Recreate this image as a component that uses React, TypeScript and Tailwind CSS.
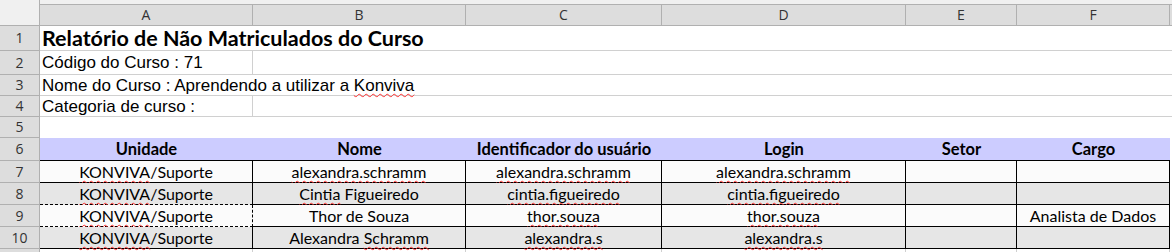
import type { ReactNode } from "react";

const Sp = ({ children }: { children: ReactNode }) => (
  <span className="underline decoration-wavy decoration-[#ff3030] decoration-1 underline-offset-[2px] [text-decoration-skip-ink:none]">
    {children}
  </span>
);

const COLS = [
  { letter: "A", w: "w-[213px]" },
  { letter: "B", w: "w-[213px]" },
  { letter: "C", w: "w-[196px]" },
  { letter: "D", w: "w-[244px]" },
  { letter: "E", w: "w-[111px]" },
  { letter: "F", w: "w-[153px]" },
];

const HEADERS = ["Unidade", "Nome", "Identificador do usuário", "Login", "Setor", "Cargo"];

type Row = { n: number; cells: ReactNode[] };

const DATA: Row[] = [
  {
    n: 7,
    cells: [
      <><Sp>KONVIVA</Sp>/Suporte</>,
      <Sp>alexandra.schramm</Sp>,
      <Sp>alexandra.schramm</Sp>,
      <Sp>alexandra.schramm</Sp>,
      "",
      "",
    ],
  },
  {
    n: 8,
    cells: [
      <><Sp>KONVIVA</Sp>/Suporte</>,
      <><Sp>Cintia</Sp> Figueiredo</>,
      <Sp>cintia.figueiredo</Sp>,
      <Sp>cintia.figueiredo</Sp>,
      "",
      "",
    ],
  },
  {
    n: 9,
    cells: [
      <><Sp>KONVIVA</Sp>/Suporte</>,
      "Thor de Souza",
      <Sp>thor.souza</Sp>,
      <Sp>thor.souza</Sp>,
      "",
      "Analista de Dados",
    ],
  },
  {
    n: 10,
    cells: [
      <><Sp>KONVIVA</Sp>/Suporte</>,
      <>Alexandra <Sp>Schramm</Sp></>,
      <Sp>alexandra.s</Sp>,
      <Sp>alexandra.s</Sp>,
      "",
      "",
    ],
  },
];

const RowHead = ({ n }: { n: number }) => (
  <div className="h-full w-[40px] shrink-0 flex items-center justify-center bg-[#dddddd] border-r border-b border-[#b0b0b0] text-[14px] leading-none text-[#333] font-['Open_Sans',sans-serif]">
    {n}
  </div>
);

// A8's bottom edge and A9's bottom/right edges carry the copy marquee
const cellBorder = (row: number, col: number) => {
  if (col === 0 && row === 8) return "border-b border-r border-black [border-bottom-style:dashed]";
  if (col === 0 && row === 9) return "border-b border-r border-black border-dashed";
  return "border-b border-r border-black";
};

export default function App() {
  return (
    <div className="w-[1172px] h-[252px] overflow-hidden bg-white text-black">
      {/* column letters */}
      <div className="flex h-[26px] bg-[#f0f0f0]">
        <div className="w-[40px] shrink-0 border-r border-b border-[#b0b0b0]" />
        <div className="flex flex-1 mt-[4px] bg-[#dddddd] border-t border-b border-[#b0b0b0] font-['Open_Sans',sans-serif] text-[14px] leading-none text-[#333]">
          {COLS.map((c) => (
            <div key={c.letter} className={`${c.w} shrink-0 flex items-center justify-center border-r border-[#b0b0b0]`}>
              {c.letter}
            </div>
          ))}
          <div className="flex-1" />
        </div>
      </div>

      {/* row 1 */}
      <div className="flex h-[25px]">
        <RowHead n={1} />
        <div className="flex-1 flex items-center pl-[2px] pt-[2px] border-b border-[#d0d0d0] whitespace-nowrap font-['Lato',sans-serif] font-bold text-[21.5px] leading-none">
          Relatório de Não Matriculados do Curso
        </div>
      </div>

      {/* row 2 */}
      <div className="flex h-[24px]">
        <RowHead n={2} />
        <div className="flex flex-1 border-b border-[#d0d0d0] font-['Liberation_Sans',Arial,sans-serif] text-[17px] leading-none">
          <div className="w-[213px] shrink-0 flex items-center pl-[2px] border-r border-[#d0d0d0] whitespace-nowrap">
            Código do Curso : 71
          </div>
        </div>
      </div>

      {/* row 3 */}
      <div className="flex h-[21px]">
        <RowHead n={3} />
        <div className="flex flex-1 items-center pl-[2px] border-b border-[#d0d0d0] whitespace-nowrap font-['Liberation_Sans',Arial,sans-serif] text-[17px] leading-none">
          <span>
            Nome do Curso : Aprendendo a utilizar a <Sp>Konviva</Sp>
          </span>
        </div>
      </div>

      {/* row 4 */}
      <div className="flex h-[21px]">
        <RowHead n={4} />
        <div className="flex flex-1 border-b border-[#d0d0d0] font-['Liberation_Sans',Arial,sans-serif] text-[17px] leading-none">
          <div className="w-[213px] shrink-0 flex items-center pl-[2px] border-r border-[#d0d0d0] whitespace-nowrap">
            Categoria de curso :
          </div>
        </div>
      </div>

      {/* row 5 */}
      <div className="flex h-[21px]">
        <RowHead n={5} />
        <div className="flex-1" />
      </div>

      {/* row 6 - table header */}
      <div className="flex h-[23px]">
        <RowHead n={6} />
        <div className="flex bg-[#ccccff] border-b border-black font-['Lato',sans-serif] font-bold text-[16.5px] leading-none">
          {COLS.map((c, i) => (
            <div key={c.letter} className={`${c.w} shrink-0 flex items-center justify-center`}>
              {HEADERS[i]}
            </div>
          ))}
        </div>
      </div>

      {/* data rows */}
      {DATA.map((r, ri) => (
        <div key={r.n} className="flex h-[22px]">
          <RowHead n={r.n} />
          <div
            className={`flex font-['Lato',sans-serif] text-[16px] leading-none ${
              ri % 2 === 1 ? "bg-[#e6e6e6]" : "bg-[#fbfbfb]"
            }`}
          >
            {r.cells.map((cell, ci) => (
              <div
                key={ci}
                className={`${COLS[ci].w} shrink-0 flex items-center justify-center whitespace-nowrap ${cellBorder(r.n, ci)}`}
              >
                <span>{cell}</span>
              </div>
            ))}
          </div>
        </div>
      ))}

      {/* row 11 */}
      <div className="flex h-[22px]">
        <RowHead n={11} />
        <div className="flex">
          {COLS.map((c) => (
            <div key={c.letter} className={`${c.w} shrink-0 border-r border-b border-[#d0d0d0]`} />
          ))}
        </div>
      </div>
    </div>
  );
}
